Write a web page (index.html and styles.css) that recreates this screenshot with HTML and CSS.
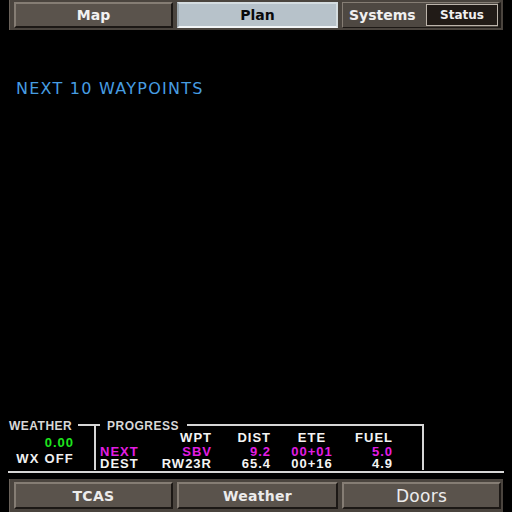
FILE: index.html
```html
<!DOCTYPE html>
<html>
<head>
<meta charset="utf-8">
<link rel="stylesheet" href="styles.css">
</head>
<body>
<div class="screen">
  <nav class="bar top">
    <div class="btn">Map</div>
    <div class="btn active">Plan</div>
    <div class="sys"><span class="sys-lbl">Systems</span><span class="status">Status</span></div>
  </nav>
  <h1 class="title">NEXT 10 WAYPOINTS</h1>
  <div class="spacer"></div>
  <section class="panel">
    <div class="wx">
      <div class="head"><span class="lbl">WEATHER</span><span class="line"></span></div>
      <div class="wx-body">
        <div class="wx-val green">0.00</div>
        <div class="wx-val">WX OFF</div>
      </div>
    </div>
    <div class="prog">
      <div class="head"><span class="line l1"></span><span class="lbl plbl">PROGRESS</span><span class="line l2"></span></div>
      <div class="grid">
        <span class="c0"></span><span class="c1">WPT</span><span class="c2">DIST</span><span class="c3">ETE</span><span class="c4">FUEL</span>
        <span class="c0 mag">NEXT</span><span class="c1 mag">SBV</span><span class="c2 mag">9.2</span><span class="c3 mag">00+01</span><span class="c4 mag">5.0</span>
        <span class="c0">DEST</span><span class="c1">RW23R</span><span class="c2">65.4</span><span class="c3">00+16</span><span class="c4">4.9</span>
      </div>
    </div>
  </section>
  <nav class="bar bottom">
    <div class="btn">TCAS</div>
    <div class="btn">Weather</div>
    <div class="btn doors">Doors</div>
  </nav>
</div>
</body>
</html>
```
FILE: styles.css
```css
* { box-sizing: border-box; }
html, body { margin: 0; padding: 0; background: #000; }
body { width: 512px; height: 512px; overflow: hidden; }
.screen {
  width: 512px; height: 512px;
  display: flex; flex-direction: column;
  font-family: "DejaVu Sans", sans-serif;
  color: #f0f0f0;
}
.bar {
  margin: 0 9px;
  width: 494px;
  background: #4a443e;
  display: grid;
  grid-template-columns: 159px 161px 159px;
  column-gap: 4px;
  padding: 2px 3px 2px 4px;
  border-left: 1px solid #6a625a;
}
.bar.top { height: 30px; }
.bar.bottom { height: 33px; padding: 3px 3px 3px 4px; }
.btn {
  background: #5a534c;
  border: 2px solid;
  border-color: #857d74 #1c1815 #1c1815 #857d74;
  display: flex; align-items: center; justify-content: center;
  font-weight: bold; font-size: 14px;
  color: #f2f2f2;
}
.bar.bottom .btn { letter-spacing: 0.3px; color: #ececec; }
.btn.doors { font-weight: normal; font-size: 17px; letter-spacing: 0.3px; color: #f6f6f6; }
.btn.active {
  background: #b7c2ca;
  border-color: #d4dce0 #d4dce0 #f2f5f7 #9ba6ad;
  color: #0a0a0a;
}
.sys {
  background: #4e4842;
  border: 1px solid;
  border-color: #857d74 #1c1815 #1c1815 #857d74;
  border-right-width: 3px;
  display: flex; align-items: center;
  padding: 0 0 0 6px;
  font-weight: bold; font-size: 14px;
}
.status {
  margin-left: auto;
  width: 72px; height: 22px;
  background: #211b17;
  border: 1px solid #bcb4ab;
  display: flex; align-items: center; justify-content: center;
  font-size: 12px;
}
.title {
  margin: 51px 0 0 16px;
  font-size: 16px; line-height: 16px;
  font-weight: normal;
  letter-spacing: 1.25px;
  color: #479de2;
}
.spacer { flex: 1; }
.panel {
  margin: 0 8px 6px;
  display: flex;
  border-bottom: 2px solid #d6d6d6;
  padding-bottom: 1px;
  font-family: "Liberation Sans", Arial, sans-serif;
  font-weight: bold;
}
.head { display: flex; height: 12px; }
.lbl {
  font-size: 12px; line-height: 12px;
  letter-spacing: 0.5px;
  color: #d8d8d8;
  padding: 0 6px 0 1px;
  white-space: nowrap;
}
.plbl { padding: 0 8px 0 7px; }
.line {
  align-self: flex-end;
  height: 8px;
  border-top: 2px solid #d6d6d6;
  flex: 1;
}
.wx { width: 86px; display: flex; flex-direction: column; }
.wx-body { padding: 5px 20px 0 0; }
.wx-val {
  text-align: right;
  font-size: 13px; line-height: 12px;
  letter-spacing: 1px;
  color: #f0f0f0;
}
.wx-val + .wx-val { margin-top: 4px; letter-spacing: 1.2px; }
.green { color: #1ee61e; }
.prog { width: 330px; display: flex; flex-direction: column; }
.l1 { flex: 0 0 6px; border-left: 2px solid #d6d6d6; }
.l2 { border-right: 2px solid #d6d6d6; }
.grid {
  flex: 1;
  border-left: 2px solid #d6d6d6;
  border-right: 2px solid #d6d6d6;
  padding-left: 4px;
  display: grid;
  grid-template-columns: 40px 72px 59px 82px 40px;
  grid-template-rows: 14px 12px 12px;
  align-items: start;
  font-size: 13px; line-height: 12px;
  letter-spacing: 1px;
  color: #f4f4f4;
}
.c1, .c2, .c4 { text-align: right; }
.c3 { text-align: center; }
.mag { color: #e31de3; }
```
